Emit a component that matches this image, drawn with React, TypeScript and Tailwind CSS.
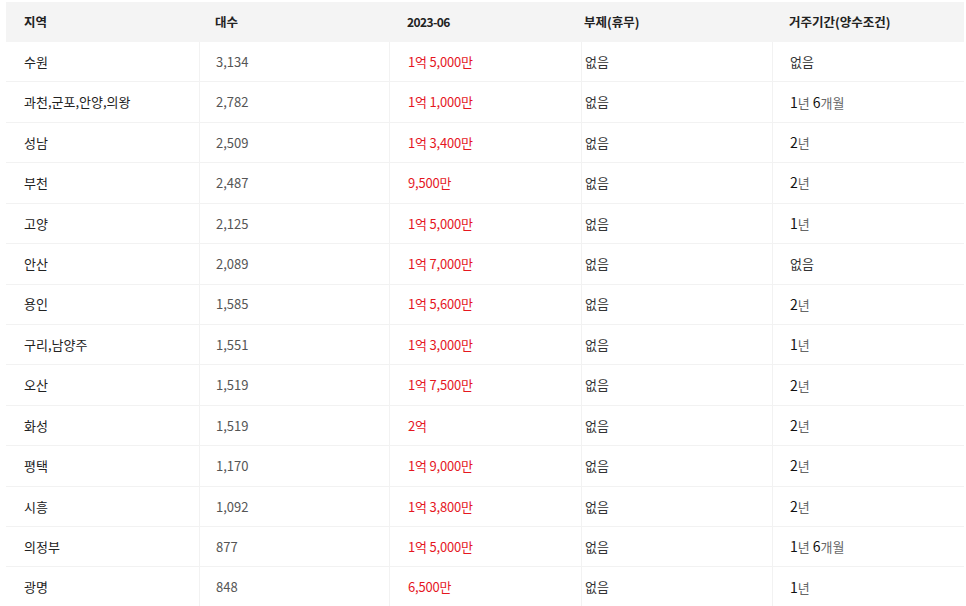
const rows: [string, string, string, string][] = [
  ['수원', '3,134', '1억 5,000만', '없음'],
  ['과천,군포,안양,의왕', '2,782', '1억 1,000만', '1년 6개월'],
  ['성남', '2,509', '1억 3,400만', '2년'],
  ['부천', '2,487', '9,500만', '2년'],
  ['고양', '2,125', '1억 5,000만', '1년'],
  ['안산', '2,089', '1억 7,000만', '없음'],
  ['용인', '1,585', '1억 5,600만', '2년'],
  ['구리,남양주', '1,551', '1억 3,000만', '1년'],
  ['오산', '1,519', '1억 7,500만', '2년'],
  ['화성', '1,519', '2억', '2년'],
  ['평택', '1,170', '1억 9,000만', '2년'],
  ['시흥', '1,092', '1억 3,800만', '2년'],
  ['의정부', '877', '1억 5,000만', '1년 6개월'],
  ['광명', '848', '6,500만', '1년'],
];

// digits dark, korean units gray
function Period({ text }: { text: string }) {
  if (text === '없음') return <span className="text-[#333]">없음</span>;
  const parts = text.split(/(\d+)/).filter(Boolean);
  return (
    <span>
      {parts.map((p, i) =>
        /\d/.test(p) ? (
          <span key={i} className="text-[#111] text-[14px]">{p}</span>
        ) : (
          <span key={i} className="text-[#666]">{p}</span>
        )
      )}
    </span>
  );
}

export default function App() {
  return (
    <div
      className="w-[966px] h-[606px] overflow-hidden bg-white pt-[2px] pl-[6px]"
      style={{ fontFamily: '"Noto Sans CJK KR", "Noto Sans", sans-serif' }}
    >
      <div className="w-[958px] text-[13px]">
        <div className="grid grid-cols-[193px_190px_192px_191px_192px] h-[40px] bg-[#f4f4f4] items-center font-bold text-[#222] text-[12.5px]">
          <div className="pl-[18px]">지역</div>
          <div className="pl-[16px]">대수</div>
          <div className="pl-[18px] text-[12px] tracking-[-0.6px]">2023-06</div>
          <div className="pl-[3px]">부제(휴무)</div>
          <div className="pl-[17px]">거주기간(양수조건)</div>
        </div>
        {rows.map((r) => (
          <div
            key={r[0]}
            className="grid grid-cols-[193px_190px_192px_191px_192px] h-[40.43px] border-b border-[#f2f2f2] items-center"
          >
            <div className="pl-[18px] text-[#222] h-full flex items-center">{r[0]}</div>
            <div className="pl-[16px] text-[#555] h-full flex items-center border-l border-[#f2f2f2]">{r[1]}</div>
            <div className="pl-[18px] text-[#e5171f] tracking-[-0.2px] h-full flex items-center border-l border-[#f2f2f2] whitespace-pre">{r[2]}</div>
            <div className="pl-[3px] text-[#333] h-full flex items-center border-l border-[#f2f2f2]">없음</div>
            <div className="pl-[17px] h-full flex items-center border-l border-[#f2f2f2]">
              <Period text={r[3]} />
            </div>
          </div>
        ))}
      </div>
    </div>
  );
}
